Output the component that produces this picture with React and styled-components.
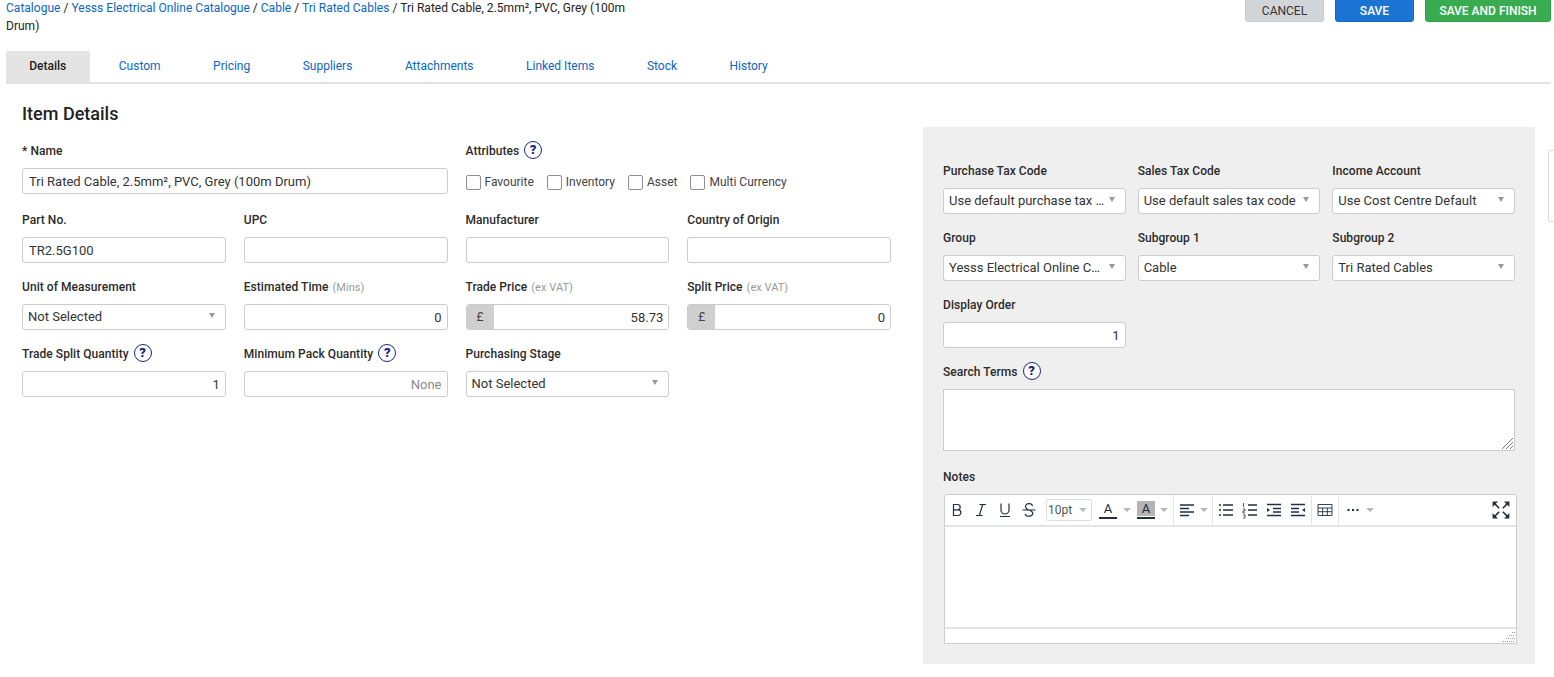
import React from 'react';
import styled, { createGlobalStyle } from 'styled-components';

const GlobalStyle = createGlobalStyle`
  html, body {
    margin: 0;
    padding: 0;
    background: #fff;
    overflow: hidden;
  }
  body {
    font-family: Roboto, "Liberation Sans", sans-serif;
    font-size: 13px;
    color: #222;
  }
  * {
    box-sizing: border-box;
  }
`;

const Page = styled.div`
  position: relative;
  width: 1554px;
  height: 677px;
  padding: 0 3px 0 6px;
  overflow: hidden;
`;

const Header = styled.div`
  display: flex;
  justify-content: space-between;
  align-items: flex-start;
  height: 51px;
`;

const Breadcrumbs = styled.div`
  width: 630px;
  margin-top: -1px;
  line-height: 18px;
  font-size: 12px;
  letter-spacing: 0.02px;
  color: #222;
`;

const Crumb = styled.a`
  color: #0b66c3;
  text-decoration: none;
`;

const Actions = styled.div`
  display: flex;
  gap: 11px;
  margin-top: -6px;
`;

const ActionButton = styled.button`
  height: 28px;
  width: ${({ $width }) => $width}px;
  padding: 6px 0 0;
  border-radius: 3px;
  border: 1px solid ${({ $border }) => $border};
  background: ${({ $bg }) => $bg};
  color: ${({ $color }) => $color};
  font-family: inherit;
  font-size: 12px;
  font-weight: ${({ $weight }) => $weight || 500};
`;

const Tabs = styled.div`
  display: flex;
  gap: 6px;
  height: 33px;
  border-bottom: 2px solid #e2e2e2;
`;

const Tab = styled.div`
  height: 31px;
  line-height: 31px;
  padding: 0 23.25px;
  font-size: 12px;
  color: ${({ $active }) => ($active ? '#222' : '#0b66c3')};
  font-weight: ${({ $active }) => ($active ? 500 : 400)};
  background: ${({ $active }) => ($active ? '#e4e4e4' : 'transparent')};
  border-radius: 2px 2px 0 0;
`;

const Body = styled.div`
  display: flex;
  align-items: flex-start;
  padding-left: 16px;
  gap: 32px;
`;

const Details = styled.div`
  width: 869px;
`;

const Title = styled.h2`
  margin: 0;
  padding-top: 18px;
  height: 57px;
  font-size: 18px;
  line-height: 24px;
  font-weight: 500;
  color: #222;
`;

const FormGrid = styled.div`
  display: grid;
  grid-template-columns: repeat(${({ $cols }) => $cols}, 1fr);
  column-gap: ${({ $gap }) => $gap}px;
  row-gap: 14px;
`;

const Field = styled.div`
  grid-column: span ${({ $span }) => $span || 1};
  min-width: 0;
`;

const Label = styled.div`
  display: flex;
  align-items: center;
  height: 18px;
  margin-bottom: 9px;
  padding-top: 2px;
  font-size: 12px;
  letter-spacing: 0.05px;
  font-weight: 500;
  color: #2b2b2b;
  white-space: nowrap;
`;

const Hint = styled.span`
  font-size: 11px;
  font-weight: 400;
  color: #9a9a9a;
  margin-left: 4px;
`;

const Help = styled.span`
  flex: none;
  width: 18px;
  height: 18px;
  margin: 0 0 2px 5px;
  border-radius: 50%;
  border: 1px solid #1a237e;
  background: #fff;
  color: #1a237e;
  font-size: 13px;
  font-weight: 900;
  line-height: 16px;
  text-align: center;
`;

const Input = styled.input`
  display: block;
  width: 100%;
  height: 26px;
  padding: 0 5px 0 6px;
  border: 1px solid #ccc;
  border-radius: 3px;
  background: #fff;
  font-family: inherit;
  font-size: 13px;
  color: #333;
  text-align: ${({ $right }) => ($right ? 'right' : 'left')};
  outline: none;
  &::placeholder {
    color: #8a8a8a;
    opacity: 1;
  }
`;

const PriceBox = styled.div`
  display: flex;
  height: 26px;
  border: 1px solid #ccc;
  border-radius: 3px;
  overflow: hidden;
  background: #fff;
`;

const Currency = styled.span`
  flex: none;
  width: 27px;
  background: #cfcfcf;
  color: #444;
  text-align: center;
  line-height: 24px;
  font-size: 12px;
`;

const PriceInput = styled(Input)`
  flex: 1;
  min-width: 0;
  height: 24px;
  border: 0;
  border-radius: 0;
`;

const SelectBox = styled.div`
  position: relative;
  display: block;
  height: 26px;
  line-height: 24px;
  padding: 0 20px 0 5px;
  border: 1px solid #ccc;
  border-radius: 3px;
  background: #fff;
  font-size: 13px;
  color: #333;
  white-space: nowrap;
  overflow: hidden;
  text-overflow: ellipsis;
  &::after {
    content: '';
    position: absolute;
    right: 10px;
    top: 8px;
    border-left: 3.5px solid transparent;
    border-right: 3.5px solid transparent;
    border-top: 5px solid #999;
  }
`;

const Checks = styled.div`
  display: flex;
  align-items: center;
  height: 28px;
`;

const Check = styled.label`
  display: flex;
  align-items: center;
  margin-right: 13px;
  font-size: 12px;
  color: #444;
`;

const Box = styled.span`
  width: 15px;
  height: 15px;
  margin-right: 4px;
  border: 1px solid #8f8f8f;
  border-radius: 2px;
  background: #fff;
`;

const Panel = styled.aside`
  width: 612px;
  height: 537px;
  margin-top: 43px;
  padding: 34px 20px 20px;
  background: #efefef;
`;

const TextWrap = styled.div`
  position: relative;
  height: 62px;
  margin-bottom: 16px;
`;

const TextArea = styled.textarea`
  display: block;
  width: 100%;
  height: 100%;
  border: 1px solid #ccc;
  background: #fff;
  resize: none;
  outline: none;
`;

const Grip = styled.svg`
  position: absolute;
  right: 1px;
  bottom: 1px;
`;

const Editor = styled.div`
  width: 573px;
  height: 150px;
  margin-left: 1px;
  display: flex;
  flex-direction: column;
  border: 1px solid #ccc;
  border-radius: 3px 3px 0 0;
  background: #fff;
`;

const Toolbar = styled.div`
  display: flex;
  align-items: center;
  height: 32px;
  flex: none;
  border-bottom: 2px solid #e4e4e4;
`;

const ToolGroup = styled.div`
  display: flex;
  align-items: center;
  height: 100%;
  padding: 0 ${({ $pad }) => $pad ?? 1}px 0 ${({ $left }) => $left ?? 1}px;
  border-right: ${({ $plain }) => ($plain ? 0 : '1px solid #e4e4e4')};
`;

const Tool = styled.span`
  display: flex;
  align-items: center;
  justify-content: center;
  width: ${({ $w }) => $w || 24}px;
  height: 24px;
  flex: none;
  color: #222f3e;
`;

const Caret = styled.span`
  display: flex;
  justify-content: center;
  width: ${({ $w }) => $w || 16}px;
  flex: none;
  &::after {
    content: '';
    border-left: 4px solid transparent;
    border-right: 4px solid transparent;
    border-top: 4px solid #b5b8bc;
  }
`;

const SizeSelect = styled.div`
  display: flex;
  align-items: center;
  justify-content: space-between;
  width: 46px;
  height: 22px;
  margin: 0 6px 0 5px;
  padding: 0 3px 0 1px;
  border: 1px solid #ddd;
  border-radius: 2px;
  font-size: 12px;
  color: #555;
`;

const ColorGlyph = styled.span`
  display: flex;
  flex-direction: column;
  align-items: center;
  width: 18px;
  height: 19px;
  font-size: 13px;
  line-height: 15px;
  color: #222f3e;
  background: linear-gradient(${({ $fill }) => $fill || 'transparent'} 15px, transparent 15px);
  &::after {
    content: '';
    width: 18px;
    height: 2px;
    margin-top: 1px;
    background: #222f3e;
  }
`;

const FullScreen = styled(Tool)`
  margin-left: auto;
  margin-right: 3px;
`;

const EditArea = styled.div`
  flex: 1;
`;

const StatusBar = styled.div`
  position: relative;
  flex: none;
  height: 16px;
  border-top: 2px solid #e4e4e4;
`;

const SideStub = styled.div`
  position: absolute;
  left: 1548px;
  top: 150px;
  width: 20px;
  height: 72px;
  border: 1px solid #ddd;
  border-radius: 2px;
  background: #fff;
`;

const Icon = ({ children, size = 20 }) => (
  <svg
    width={size}
    height={size}
    viewBox="0 0 20 20"
    fill="none"
    stroke="currentColor"
    strokeWidth="1.2"
  >
    {children}
  </svg>
);

const toolIcons = {
  bold: <path d="M6.5 4.5h4a2.7 2.7 0 0 1 0 5.4h-4zM6.5 9.9h4.6a2.8 2.8 0 0 1 0 5.6H6.5z" />,
  italic: <path d="M8.5 4.5h6.5M5 15.5h6.5M11.7 4.5l-3.4 11" />,
  underline: <path d="M6 3.5v6.5a4 4 0 0 0 8 0V3.5M5 16.5h10" />,
  strike: (
    <path d="M3.5 10h13M13.5 6a3.5 2.6 0 0 0-7 .5c0 1.2.8 2.5 3.5 3.5 2.7 1 3.8 2 3.8 3.4a3.7 2.6 0 0 1-7.6.3" />
  ),
  align: <path d="M3 5h14M3 8.5h9M3 12h14M3 15.5h9" strokeWidth="1.4" />,
  bullets: (
    <path d="M7 5h10M7 10h10M7 15h10M3 5h2M3 10h2M3 15h2" strokeWidth="1.5" />
  ),
  numbers: (
    <>
      <path d="M8 5h9M8 10h9M8 15h9" strokeWidth="1.5" />
      <path d="M3.5 3v4M3 9h2v2H3v2h2M3 15h2v3H3" strokeWidth="0.8" />
    </>
  ),
  indent: (
    <>
      <path d="M3 4.5h14M9 8.5h8M9 12h8M3 15.5h14" strokeWidth="1.4" />
      <path d="M3 8l3 2-3 2z" fill="currentColor" stroke="none" />
    </>
  ),
  outdent: (
    <>
      <path d="M3 4.5h14M3 8.5h8M3 12h8M3 15.5h14" strokeWidth="1.4" />
      <path d="M17 8l-3 2 3 2z" fill="currentColor" stroke="none" />
    </>
  ),
  table: (
    <path
      d="M3 4.5h14v11H3zM3 8h14M3 11.7h14M7.6 8v7.5M12.3 8v7.5"
      strokeWidth="0.9"
    />
  ),
  more: <path d="M4.5 10h2M9 10h2M13.5 10h2" strokeWidth="2" />,
  full: (
    <>
      <path
        d="M3 3h4.5L3 7.5zM17 3v4.5L12.5 3zM3 17v-4.5L7.500 17zM17 17h-4.5l4.500-4.500z"
        fill="currentColor"
        stroke="none"
      />
      <path d="M4.500 4.500l4 4M15.500 4.500l-4 4M4.500 15.500l4-4M15.500 15.500l-4-4" strokeWidth="1.3" />
    </>
  ),
};

const ToolIcon = ({ name, w }) => (
  <Tool $w={w}>
    <Icon>{toolIcons[name]}</Icon>
  </Tool>
);

const TextField = ({ label, hint, help, value, placeholder, right, span }) => (
  <Field $span={span}>
    <Label>
      {label}
      {hint && <Hint>{hint}</Hint>}
      {help && <Help>?</Help>}
    </Label>
    <Input
      defaultValue={value}
      placeholder={placeholder}
      $right={right}
    />
  </Field>
);

const SelectField = ({ label, value }) => (
  <Field>
    <Label>{label}</Label>
    <SelectBox>{value}</SelectBox>
  </Field>
);

const PriceField = ({ label, value }) => (
  <Field>
    <Label>
      {label}
      <Hint>(ex VAT)</Hint>
    </Label>
    <PriceBox>
      <Currency>£</Currency>
      <PriceInput defaultValue={value} $right />
    </PriceBox>
  </Field>
);

const tabs = [
  'Details',
  'Custom',
  'Pricing',
  'Suppliers',
  'Attachments',
  'Linked Items',
  'Stock',
  'History',
];

const App = () => (
  <Page>
    <GlobalStyle />
    <Header>
      <Breadcrumbs>
        <Crumb>Catalogue</Crumb> / <Crumb>Yesss Electrical Online Catalogue</Crumb> /{' '}
        <Crumb>Cable</Crumb> / <Crumb>Tri Rated Cables</Crumb> / Tri Rated Cable,
        2.5mm², PVC, Grey (100m Drum)
      </Breadcrumbs>
      <Actions>
        <ActionButton $width={79} $bg="#d2d5d8" $border="#c8cbce" $color="#333" $weight={400}>
          CANCEL
        </ActionButton>
        <ActionButton $width={79} $bg="#1b74d4" $border="#1768bf" $color="#fff">
          SAVE
        </ActionButton>
        <ActionButton $width={126} $bg="#39ac52" $border="#32a04a" $color="#fff">
          SAVE AND FINISH
        </ActionButton>
      </Actions>
    </Header>

    <Tabs>
      {tabs.map((tab, i) => (
        <Tab key={tab} $active={i === 0}>
          {tab}
        </Tab>
      ))}
    </Tabs>

    <Body>
      <Details>
        <Title>Item Details</Title>
        <FormGrid $cols={4} $gap={18}>
          <TextField
            span={2}
            label="* Name"
            value="Tri Rated Cable, 2.5mm², PVC, Grey (100m Drum)"
          />
          <Field $span={2}>
            <Label>
              Attributes
              <Help>?</Help>
            </Label>
            <Checks>
              <Check><Box />Favourite</Check>
              <Check><Box />Inventory</Check>
              <Check><Box />Asset</Check>
              <Check><Box />Multi Currency</Check>
            </Checks>
          </Field>

          <TextField label="Part No." value="TR2.5G100" />
          <TextField label="UPC" />
          <TextField label="Manufacturer" />
          <TextField label="Country of Origin" />

          <SelectField label="Unit of Measurement" value="Not Selected" />
          <TextField label="Estimated Time" hint="(Mins)" value="0" right />
          <PriceField label="Trade Price" value="58.73" />
          <PriceField label="Split Price" value="0" />

          <TextField label="Trade Split Quantity" help value="1" right />
          <TextField label="Minimum Pack Quantity" help placeholder="None" right />
          <SelectField label="Purchasing Stage" value="Not Selected" />
        </FormGrid>
      </Details>

      <Panel>
        <FormGrid $cols={3} $gap={12}>
          <SelectField label="Purchase Tax Code" value="Use default purchase tax code" />
          <SelectField label="Sales Tax Code" value="Use default sales tax code" />
          <SelectField label="Income Account" value="Use Cost Centre Default" />

          <SelectField label="Group" value="Yesss Electrical Online Catalogue" />
          <SelectField label="Subgroup 1" value="Cable" />
          <SelectField label="Subgroup 2" value="Tri Rated Cables" />

          <TextField label="Display Order" value="1" right />
          <Field $span={2} />

          <Field $span={3}>
            <Label>
              Search Terms
              <Help>?</Help>
            </Label>
            <TextWrap>
              <TextArea />
              <Grip width="13" height="13" viewBox="0 0 13 13" stroke="#777" strokeWidth="1">
                <path d="M1 12L12 1M5 12l7-7M9 12l3-3" />
              </Grip>
            </TextWrap>
          </Field>
        </FormGrid>

        <Label>Notes</Label>
        <Editor>
          <Toolbar>
            <ToolGroup $left={0} $pad={1}>
              <ToolIcon name="bold" />
              <ToolIcon name="italic" />
              <ToolIcon name="underline" />
              <ToolIcon name="strike" />
              <SizeSelect>
                10pt
                <Caret $w={10} />
              </SizeSelect>
              <Tool $w={20}><ColorGlyph>A</ColorGlyph></Tool>
              <Caret $w={18} />
              <Tool $w={20}><ColorGlyph $fill="#b4b4b4">A</ColorGlyph></Tool>
              <Caret />
            </ToolGroup>
            <ToolGroup $pad={4}>
              <ToolIcon name="align" />
              <Caret $w={9} />
            </ToolGroup>
            <ToolGroup $left={1}>
              <ToolIcon name="bullets" />
              <ToolIcon name="numbers" />
              <ToolIcon name="indent" />
              <ToolIcon name="outdent" />
            </ToolGroup>
            <ToolGroup $left={1} $pad={1}>
              <ToolIcon name="table" />
            </ToolGroup>
            <ToolGroup $left={2} $plain>
              <ToolIcon name="more" />
              <Caret $w={9} />
            </ToolGroup>
            <FullScreen>
              <Icon size={24}>{toolIcons.full}</Icon>
            </FullScreen>
          </Toolbar>
          <EditArea />
          <StatusBar>
            <Grip width="12" height="12" viewBox="0 0 12 12" stroke="#999" strokeWidth="1" strokeDasharray="1 1">
              <path d="M0 11.5h12M3 8.5h9M6 5.5h6M9 2.5h3" />
            </Grip>
          </StatusBar>
        </Editor>
      </Panel>
    </Body>
    <SideStub />
  </Page>
);

export default App;
